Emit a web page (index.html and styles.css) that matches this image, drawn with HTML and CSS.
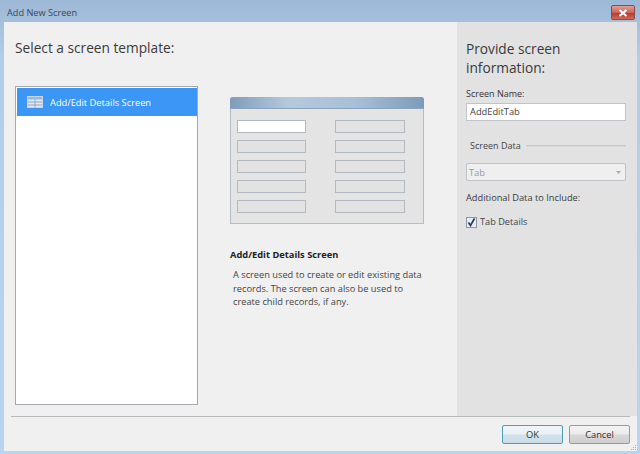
FILE: index.html
```html
<!DOCTYPE html>
<html lang="en">
<head>
<meta charset="utf-8">
<title>Add New Screen</title>
<link rel="stylesheet" href="styles.css">
</head>
<body>
<div class="window">
  <div class="titlebar">
    <span class="title">Add New Screen</span>
    <button class="close" aria-label="Close"><svg width="10" height="8" viewBox="0 0 10 8"><path d="M1.5 1 L8.5 7 M8.5 1 L1.5 7" stroke="#fff" stroke-width="2" fill="none"/></svg></button>
  </div>
  <div class="client">
    <div class="main">
      <section class="templates">
        <h1 class="heading">Select a screen template:</h1>
        <div class="columns">
          <div class="list">
            <div class="list-item">
              <svg class="item-icon" width="16" height="12" viewBox="0 0 16 12">
                <rect x="0.5" y="0.5" width="15" height="11" fill="#dfe8f4" stroke="#c9d6e8"/>
                <rect x="1" y="1" width="14" height="2.5" fill="#9db7d8"/>
                <path d="M1 6H15M1 9H15M8 3.5V11.5" stroke="#8fa8c8" fill="none"/>
              </svg>
              <span>Add/Edit Details Screen</span>
            </div>
          </div>
          <div class="detail">
            <div class="preview">
              <div class="preview-bar"></div>
              <div class="preview-grid">
                <div class="slot slot-active"></div><div class="slot"></div>
                <div class="slot"></div><div class="slot"></div>
                <div class="slot"></div><div class="slot"></div>
                <div class="slot"></div><div class="slot"></div>
                <div class="slot"></div><div class="slot"></div>
              </div>
            </div>
            <h2 class="detail-title">Add/Edit Details Screen</h2>
            <p class="detail-text">A screen used to create or edit existing data records. The screen can also be used to create child records, if any.</p>
          </div>
        </div>
      </section>
      <aside class="info">
        <h1 class="heading info-heading">Provide screen information:</h1>
        <label class="field-label">Screen Name:</label>
        <div class="input">AddEditTab</div>
        <div class="group"><span>Screen Data</span><i class="group-line"></i></div>
        <div class="select"><span>Tab</span><svg width="5" height="3" viewBox="0 0 5 3"><path d="M0 0H5L2.5 3Z" fill="#aaa"/></svg></div>
        <div class="field-label additional">Additional Data to Include:</div>
        <div class="check-row">
          <span class="checkbox"><svg width="9" height="9" viewBox="0 0 9 9"><path d="M1.5 4.5 L3.5 7.5 L7.5 0.5" stroke="#2a3a5a" stroke-width="1.7" fill="none"/></svg></span>
          <span>Tab Details</span>
        </div>
      </aside>
    </div>
    <div class="footer">
      <button class="btn btn-default">OK</button>
      <button class="btn">Cancel</button>
      <svg class="grip" width="7" height="7" viewBox="0 0 7 7"><path d="M5 1h1v1H5zM3 3h1v1H3zM5 3h1v1H5zM1 5h1v1H1zM3 5h1v1H3zM5 5h1v1H5z" fill="#b0b0b0"/></svg>
    </div>
  </div>
</div>
</body>
</html>
```
FILE: styles.css
```css
* { box-sizing: border-box; }
html, body { margin: 0; padding: 0; }
body { width: 640px; height: 454px; overflow: hidden; font-family: "Open Sans", "Noto Sans", sans-serif; color: #333; }
.window { width: 640px; height: 454px; display: flex; flex-direction: column; padding: 0 3px 3px 4px; background: linear-gradient(180deg, #9db8d6 0, #b3cde8 60px, #b9d4ee 100%); }
.titlebar { height: 22px; flex: none; display: flex; align-items: flex-start; justify-content: space-between; }
.title { font-size: 9.2px; line-height: 26px; margin-left: 3px; color: #3c4658; }
.close { width: 24px; height: 15px; margin: 5px 2px 0 0; padding: 0; border: 1px solid #8a4a48; border-radius: 2px; background: linear-gradient(180deg, #e0a094 0, #cf6458 50%, #b83a2c 55%, #cf6a58 100%); display: flex; align-items: center; justify-content: center; }
.client { position: relative; flex: 1; display: flex; flex-direction: column; background: #f0f0f0; min-height: 0; }
.main { height: 394px; flex: none; display: flex; }
.templates { width: 453px; flex: none; padding: 16px 0 0 11px; }
.heading { margin: 0; font-size: 13.7px; font-weight: 400; line-height: 20px; color: #3a3a3a; }
.columns { display: flex; margin-top: 28px; }
.list { width: 183px; height: 319px; flex: none; background: #fff; border: 1px solid #a5a9ad; padding: 1px 0 0 1px; }
.list-item { height: 28px; background: #3c96f5; color: #fff; display: flex; align-items: center; gap: 7px; padding-left: 10px; font-size: 9.3px; }
.item-icon { flex: none; }
.detail { margin-left: 32px; padding-top: 11px; width: 200px; }
.preview { width: 194px; height: 127px; background: #e4e4e4; border: 1px solid #b6bcc4; border-top: 0; border-radius: 3px 3px 0 0; }
.preview-bar { height: 12px; margin: 0 -1px; border-radius: 3px 3px 0 0; background: linear-gradient(90deg, #7f9cbc 0, #b6c9dc 30%, #a8bfd6 65%, #7c9aba 100%); border-bottom: 1px solid #8ea4ba; }
.preview-grid { display: grid; grid-template-columns: 69px 70px; column-gap: 29px; row-gap: 7px; padding: 11px 0 0 6px; }
.slot { height: 13px; border: 1px solid #b2b9c1; background: #e2e2e2; }
.slot-active { background: #fff; }
.detail-title { margin: 24px 0 0; font-size: 9.3px; line-height: 14px; font-weight: 700; color: #222; }
.detail-text { margin: 6px 0 0 3px; width: 195px; font-size: 9.25px; line-height: 13.5px; color: #444; }
.info { flex: 1; background: #e2e2e2; padding: 17px 11px 0 9px; }
.info-heading { line-height: 19px; width: 130px; }
.field-label { display: block; font-size: 9px; line-height: 12px; color: #333; }
.info-heading + .field-label { margin-top: 11px; }
.input { margin-top: 3px; width: 160px; height: 18px; border: 1px solid #c0c4c8; background: #fff; font-size: 9.3px; line-height: 16px; padding-left: 3px; color: #444; }
.group { display: flex; align-items: center; gap: 5px; margin: 19px 0 0 4px; width: 156px; font-size: 9px; line-height: 12px; color: #444; }
.group-line { flex: 1; height: 1px; background: #c9c9c9; border-bottom: 1px solid #d8d8d8; box-sizing: content-box; }
.select { margin-top: 11px; width: 160px; height: 18px; border: 1px solid #bfc2c6; border-radius: 2px; background: #efefef; display: flex; align-items: center; justify-content: space-between; padding: 0 4px 0 2px; font-size: 9.3px; color: #999; }
.additional { margin-top: 11px; font-size: 9.25px; color: #3c3c3c; }
.check-row { margin-top: 12px; display: flex; align-items: center; gap: 3px; font-size: 9.2px; line-height: 12px; color: #444; }
.checkbox { width: 11px; height: 11px; border: 1px solid #8c96a4; background: #e8edf4; display: flex; align-items: center; justify-content: center; }
.footer { flex: 1; margin: 0 7px 0 7px; border-top: 1px solid #b9b9b9; display: flex; justify-content: flex-end; gap: 6px; padding: 8px 0 0 0; }
.btn { width: 61px; height: 19px; padding: 0; border: 1px solid #9a9a9a; border-radius: 2px; background: linear-gradient(180deg, #f4f4f4 0, #ebebeb 48%, #d8d8d8 52%, #cfcfcf 100%); font-family: inherit; font-size: 9.3px; color: #333; }
.btn-default { border-color: #4f9cb4; background: linear-gradient(180deg, #eef6fa 0, #e6f0f5 48%, #d3e2ea 52%, #cadde6 100%); }
.grip { position: absolute; right: 0; bottom: 0; }
```
